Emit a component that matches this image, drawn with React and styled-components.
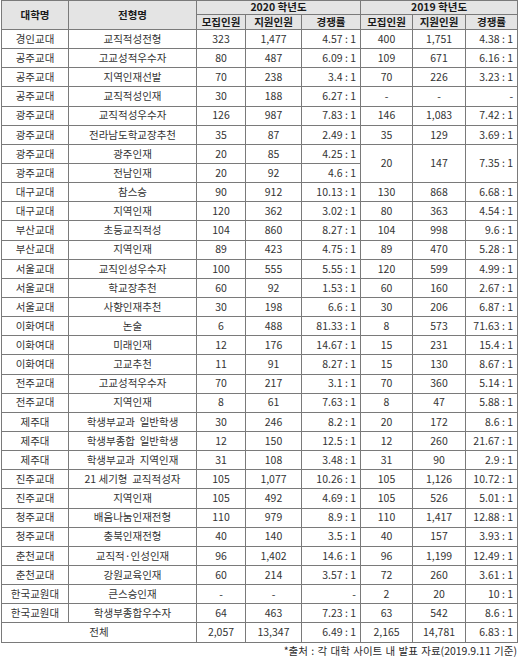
import React from "react";
import styled, { createGlobalStyle } from "styled-components";

const Global = createGlobalStyle`
  html, body { margin: 0; padding: 0; background: #fff; }
  body { font-family: "Noto Sans CJK KR", "Noto Sans", sans-serif; }
`;

const Wrap = styled.div`
  width: 518px;
  padding: 0 0 0 1px;
`;

const Table = styled.table`
  width: 516px;
  table-layout: fixed;
  border-collapse: collapse;
  border: 1px solid #6f6f6f;
  font-size: 10.5px;
  color: #333;
`;

const HeadRow = styled.tr`
  height: ${(p) => p.$h}px;
  background: #e4e4e4;
`;

const Th = styled.th`
  border: 1px solid #7a7a7a;
  border-top-color: ${(p) => (p.$soft ? "#a8a8a8" : "#7a7a7a")};
  font-weight: 700;
  color: #1a1a1a;
  font-size: 10.5px;
  line-height: 1;
  padding: 0;
  text-align: center;
  white-space: nowrap;
`;

const Row = styled.tr`
  height: 19.15px;
`;

const Td = styled.td`
  border: 1px solid #7a7a7a;
  padding: 0 ${(p) => (p.$right ? "4px" : "0")} 0 0;
  text-align: ${(p) => (p.$right ? "right" : "center")};
  line-height: 1;
  white-space: pre;
`;

const Note = styled.div`
  text-align: right;
  font-size: 10.5px;
  line-height: 13px;
  color: #2a2a2a;
  padding: 1px 2px 0 0;
  word-spacing: 1px;
`;

const rows = [
  ["경인교대", "교직적성전형", "323", "1,477", "4.57 : 1", "400", "1,751", "4.38 : 1"],
  ["공주교대", "고교성적우수자", "80", "487", "6.09 : 1", "109", "671", "6.16 : 1"],
  ["공주교대", "지역인재선발", "70", "238", "3.4 : 1", "70", "226", "3.23 : 1"],
  ["공주교대", "교직적성인재", "30", "188", "6.27 : 1", "-", "-", "-"],
  ["광주교대", "교직적성우수자", "126", "987", "7.83 : 1", "146", "1,083", "7.42 : 1"],
  ["광주교대", "전라남도학교장추천", "35", "87", "2.49 : 1", "35", "129", "3.69 : 1"],
  ["광주교대", "광주인재", "20", "85", "4.25 : 1", "20", "147", "7.35 : 1", 2],
  ["광주교대", "전남인재", "20", "92", "4.6 : 1", null],
  ["대구교대", "참스승", "90", "912", "10.13 : 1", "130", "868", "6.68 : 1"],
  ["대구교대", "지역인재", "120", "362", "3.02 : 1", "80", "363", "4.54 : 1"],
  ["부산교대", "초등교직적성", "104", "860", "8.27 : 1", "104", "998", "9.6 : 1"],
  ["부산교대", "지역인재", "89", "423", "4.75 : 1", "89", "470", "5.28 : 1"],
  ["서울교대", "교직인성우수자", "100", "555", "5.55 : 1", "120", "599", "4.99 : 1"],
  ["서울교대", "학교장추천", "60", "92", "1.53 : 1", "60", "160", "2.67 : 1"],
  ["서울교대", "사향인재추천", "30", "198", "6.6 : 1", "30", "206", "6.87 : 1"],
  ["이화여대", "논술", "6", "488", "81.33 : 1", "8", "573", "71.63 : 1"],
  ["이화여대", "미래인재", "12", "176", "14.67 : 1", "15", "231", "15.4 : 1"],
  ["이화여대", "고교추천", "11", "91", "8.27 : 1", "15", "130", "8.67 : 1"],
  ["전주교대", "고교성적우수자", "70", "217", "3.1 : 1", "70", "360", "5.14 : 1"],
  ["전주교대", "지역인재", "8", "61", "7.63 : 1", "8", "47", "5.88 : 1"],
  ["제주대", "학생부교과  일반학생", "30", "246", "8.2 : 1", "20", "172", "8.6 : 1"],
  ["제주대", "학생부종합  일반학생", "12", "150", "12.5 : 1", "12", "260", "21.67 : 1"],
  ["제주대", "학생부교과  지역인재", "31", "108", "3.48 : 1", "31", "90", "2.9 : 1"],
  ["진주교대", "21 세기형  교직적성자", "105", "1,077", "10.26 : 1", "105", "1,126", "10.72 : 1"],
  ["진주교대", "지역인재", "105", "492", "4.69 : 1", "105", "526", "5.01 : 1"],
  ["청주교대", "배움나눔인재전형", "110", "979", "8.9 : 1", "110", "1,417", "12.88 : 1"],
  ["청주교대", "충북인재전형", "40", "140", "3.5 : 1", "40", "157", "3.93 : 1"],
  ["춘천교대", "교직적·인성인재", "96", "1,402", "14.6 : 1", "96", "1,199", "12.49 : 1"],
  ["춘천교대", "강원교육인재", "60", "214", "3.57 : 1", "72", "260", "3.61 : 1"],
  ["한국교원대", "큰스승인재", "-", "-", "-", "2", "20", "10 : 1"],
  ["한국교원대", "학생부종합우수자", "64", "463", "7.23 : 1", "63", "542", "8.6 : 1"],
];

const widths = [67, 128, 49, 56, 59, 52, 53, 52];

export default function App() {
  return (
    <Wrap>
      <Global />
      <Table>
        <colgroup>
          {widths.map((w, i) => (
            <col key={i} style={{ width: w }} />
          ))}
        </colgroup>
        <thead>
          <HeadRow $h={14}>
            <Th rowSpan={2}>대학명</Th>
            <Th rowSpan={2}>전형명</Th>
            <Th colSpan={3}>2020 학년도</Th>
            <Th colSpan={3}>2019 학년도</Th>
          </HeadRow>
          <HeadRow $h={15}>
            <Th $soft>모집인원</Th>
            <Th $soft>지원인원</Th>
            <Th $soft>경쟁률</Th>
            <Th $soft>모집인원</Th>
            <Th $soft>지원인원</Th>
            <Th $soft>경쟁률</Th>
          </HeadRow>
        </thead>
        <tbody>
          {rows.map((r, i) => (
            <Row key={i}>
              <Td>{r[0]}</Td>
              <Td>{r[1]}</Td>
              <Td>{r[2]}</Td>
              <Td>{r[3]}</Td>
              <Td $right>{r[4]}</Td>
              {r[5] !== null && (
                <>
                  <Td rowSpan={r[8] || 1}>{r[5]}</Td>
                  <Td rowSpan={r[8] || 1}>{r[6]}</Td>
                  <Td $right rowSpan={r[8] || 1}>{r[7]}</Td>
                </>
              )}
            </Row>
          ))}
          <Row>
            <Td colSpan={2}>전체</Td>
            <Td>2,057</Td>
            <Td>13,347</Td>
            <Td $right>6.49 : 1</Td>
            <Td>2,165</Td>
            <Td>14,781</Td>
            <Td $right>6.83 : 1</Td>
          </Row>
        </tbody>
      </Table>
      <Note>*출처 : 각 대학 사이트 내 발표 자료(2019.9.11 기준)</Note>
    </Wrap>
  );
}
